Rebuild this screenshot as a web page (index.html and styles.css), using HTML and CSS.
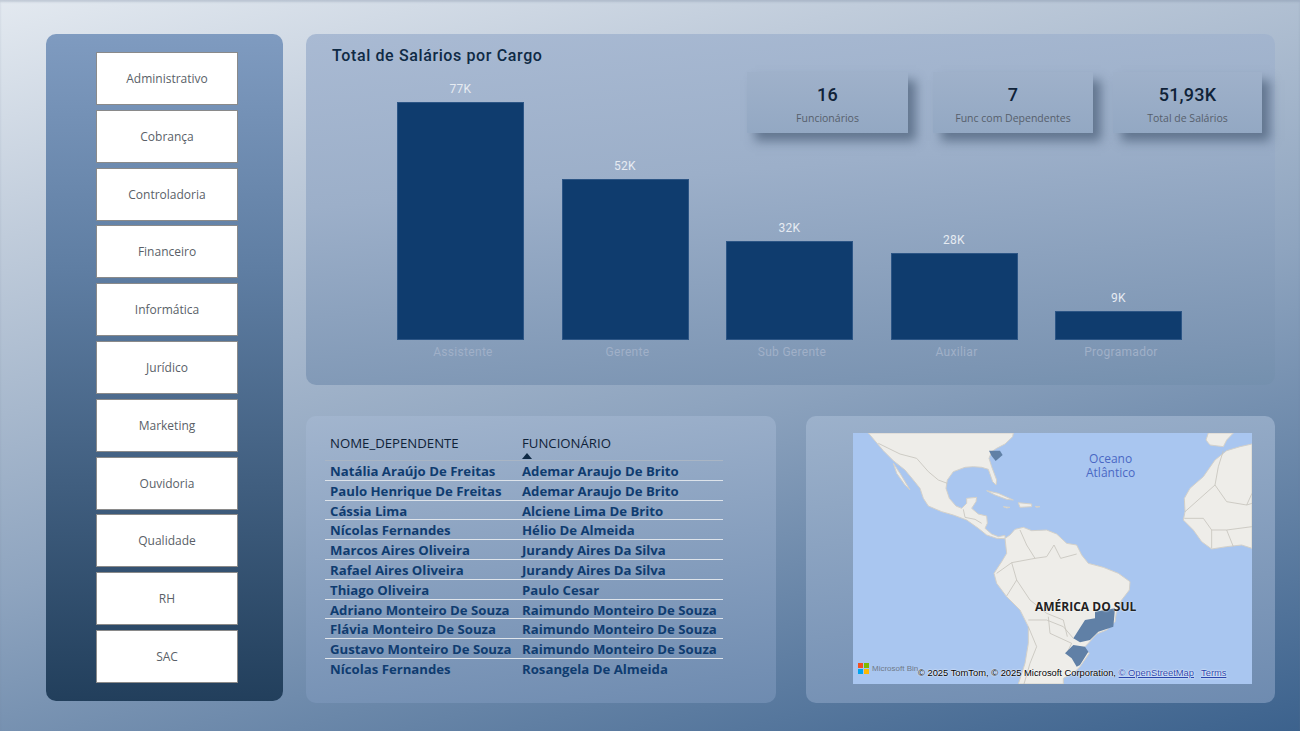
FILE: index.html
```html
<!DOCTYPE html>
<html lang="pt-br">

<head>
    <meta charset="UTF-8">
    <meta name="viewport" content="width=device-width, initial-scale=1.0">
    <title>Salários</title>
    <link rel="stylesheet" href="styles.css">
</head>

<body>
    <main class="pagina">
        <aside class="lateral">
            <button class="filtro">Administrativo</button>
            <button class="filtro">Cobrança</button>
            <button class="filtro">Controladoria</button>
            <button class="filtro">Financeiro</button>
            <button class="filtro">Informática</button>
            <button class="filtro">Jurídico</button>
            <button class="filtro">Marketing</button>
            <button class="filtro">Ouvidoria</button>
            <button class="filtro">Qualidade</button>
            <button class="filtro">RH</button>
            <button class="filtro">SAC</button>
        </aside>

        <div class="conteudo">
            <section class="painel grafico">
                <h1 class="titulo">Total de Salários por Cargo</h1>

                <div class="kpis">
                    <div class="kpi kpi-func"><strong>16</strong><span>Funcionários</span></div>
                    <div class="kpi kpi-dep"><strong>7</strong><span>Func com Dependentes</span></div>
                    <div class="kpi kpi-total"><strong>51,93K</strong><span>Total de Salários</span></div>
                </div>

                <div class="barras">
                    <div class="coluna"><span class="valor">77K</span><div class="barra" style="height: 238px"></div><span class="cargo">Assistente</span></div>
                    <div class="coluna"><span class="valor">52K</span><div class="barra" style="height: 161px"></div><span class="cargo">Gerente</span></div>
                    <div class="coluna"><span class="valor">32K</span><div class="barra" style="height: 99px"></div><span class="cargo">Sub Gerente</span></div>
                    <div class="coluna"><span class="valor">28K</span><div class="barra" style="height: 87px"></div><span class="cargo">Auxiliar</span></div>
                    <div class="coluna"><span class="valor">9K</span><div class="barra" style="height: 29px"></div><span class="cargo">Programador</span></div>
                </div>
            </section>

            <div class="linha-baixo">
                <section class="painel tabela-painel">
                    <table class="tabela">
                        <thead>
                            <tr>
                                <th class="col-nome">NOME_DEPENDENTE</th>
                                <th>FUNCIONÁRIO<i class="seta"></i></th>
                            </tr>
                        </thead>
                        <tbody>
                            <tr><td>Natália Araújo De Freitas</td><td>Ademar Araujo De Brito</td></tr>
                            <tr><td>Paulo Henrique De Freitas</td><td>Ademar Araujo De Brito</td></tr>
                            <tr><td>Cássia Lima</td><td>Alciene Lima De Brito</td></tr>
                            <tr><td>Nícolas Fernandes</td><td>Hélio De Almeida</td></tr>
                            <tr><td>Marcos Aires Oliveira</td><td>Jurandy Aires Da Silva</td></tr>
                            <tr><td>Rafael Aires Oliveira</td><td>Jurandy Aires Da Silva</td></tr>
                            <tr><td>Thiago Oliveira</td><td>Paulo Cesar</td></tr>
                            <tr><td>Adriano Monteiro De Souza</td><td>Raimundo Monteiro De Souza</td></tr>
                            <tr><td>Flávia Monteiro De Souza</td><td>Raimundo Monteiro De Souza</td></tr>
                            <tr><td>Gustavo Monteiro De Souza</td><td>Raimundo Monteiro De Souza</td></tr>
                            <tr><td>Nícolas Fernandes</td><td>Rosangela De Almeida</td></tr>
                        </tbody>
                    </table>
                </section>

                <section class="painel mapa-painel">
                    <div class="mapa">
                        <svg class="mapa-svg" viewBox="9 9 1197 753" aria-hidden="true">
                            <g class="terra">
                                <path d="M55 9 L490 9 L488 20 L465 42 L440 55 L425 65 L417 85 L425 110 L440 150 L438 165 L428 155 L415 118 L395 112 L370 110 L345 112 L310 125 L292 150 L288 175 L298 205 L318 228 L335 235 L350 220 L350 205 L380 202 L378 215 L365 235 L385 252 L410 258 L412 280 L405 295 L425 312 L445 320 L465 316 L465 326 L440 325 L410 315 L385 295 L350 270 L310 255 L275 245 L235 228 L220 205 L210 175 L190 150 L165 120 L130 92 L100 62 Z" />
                                <path d="M130 100 L150 130 L180 180 L165 165 L140 130 Z" />
                                <path d="M410 182 L445 190 L490 210 L470 208 L435 195 Z" />
                                <path d="M505 218 L545 222 L545 230 L510 232 Z" />
                                <path d="M460 230 L480 232 L470 234 Z" />
                                <path d="M555 229 L570 230 L560 232 Z" />
                                <path d="M465 325 L480 315 L495 298 L520 292 L545 302 L590 300 L620 312 L650 340 L680 345 L695 375 L715 400 L760 412 L805 430 L840 455 L838 480 L815 510 L800 540 L795 575 L770 600 L740 612 L715 640 L700 655 L718 670 L690 710 L675 725 L640 745 L640 762 L505 762 L525 700 L535 640 L535 590 L510 540 L470 500 L440 460 L432 430 L455 395 L470 370 Z" />
                                <path d="M1206 42 L1170 50 L1130 62 L1095 90 L1060 140 L1020 175 L1003 205 L1005 245 L1000 270 L1030 300 L1055 335 L1085 357 L1130 350 L1175 345 L1206 355 Z" />
                                <path d="M1075 9 L1150 9 L1130 30 L1120 50 L1080 45 L1068 30 Z" />
                            </g>
                            <g class="fronteiras">
                                <path d="M85 40 L150 72 L200 85 L235 125 L265 150 L292 160" />
                                <path d="M340 238 L345 262 L375 268 L395 280" />
                                <path d="M510 300 L530 345 L555 385 L590 380 L612 345" />
                                <path d="M612 345 L632 385 L680 372" />
                                <path d="M440 430 L485 398 L555 385" />
                                <path d="M485 398 L500 450 L540 510 L590 550 L640 570 L652 620" />
                                <path d="M470 498 L500 450" />
                                <path d="M535 570 L590 570 L640 590 L670 625" />
                                <path d="M535 590 L560 650 L540 700 L522 762" />
                                <path d="M595 560 L600 610 L665 640 L650 670" />
                                <path d="M1005 245 L1095 165 L1130 215 L1190 225 L1206 220" />
                                <path d="M1095 165 L1105 110 L1120 62" />
                                <path d="M1003 265 L1060 265 L1085 300 L1085 355" />
                                <path d="M1085 300 L1130 300 L1150 350" />
                                <path d="M1130 300 L1206 290" />
                                <path d="M1190 225 L1206 190" />
                            </g>
                            <g class="estados">
                                <path d="M417 62 L450 62 L458 75 L437 93 L425 78 Z" />
                                <path d="M735 545 L795 535 L790 590 L745 605 L720 630 L690 637 L670 625 L705 570 L735 565 Z" />
                                <path d="M645 670 L670 645 L705 650 L715 665 L690 705 L680 710 L665 685 Z" />
                            </g>
                        </svg>
                        <span class="rotulo-oceano">Oceano<br>Atlântico</span>
                        <span class="rotulo-sul">AMÉRICA DO SUL</span>
                        <div class="marca">
                            <svg width="11" height="11" viewBox="0 0 11 11" aria-hidden="true">
                                <rect width="5" height="5" fill="#f25022" />
                                <rect x="6" width="5" height="5" fill="#7fba00" />
                                <rect y="6" width="5" height="5" fill="#00a4ef" />
                                <rect x="6" y="6" width="5" height="5" fill="#ffb900" />
                            </svg>
                            <span>Microsoft Bing</span>
                        </div>
                        <div class="creditos">© 2025 TomTom, © 2025 Microsoft Corporation, <a>© OpenStreetMap</a><a class="termos">Terms</a></div>
                    </div>
                </section>
            </div>
        </div>
    </main>
</body>

</html>
```

FILE: styles.css
```css
html,
body {
    margin: 0;
    height: 100%;
    font-family: 'Open Sans', 'Noto Sans', sans-serif;
}

.pagina {
    box-sizing: border-box;
    width: 1300px;
    height: 731px;
    overflow: hidden;
    padding: 34px 25px 28px 46px;
    display: flex;
    gap: 23px;
    background: linear-gradient(165deg, #e3e9f0 0%, #c0ccdb 22%, #8ea4bf 55%, #3c628d 100%);
    box-shadow: inset 0 2px 2px rgba(120, 135, 160, 0.3);
}

.lateral {
    box-sizing: border-box;
    width: 237px;
    height: 667px;
    padding: 18px 0 0 5px;
    display: flex;
    flex-direction: column;
    align-items: center;
    gap: 4.8px;
    border-radius: 10px;
    background: linear-gradient(180deg, #7f9bc0 0%, #5f7ea3 35%, #223f5c 100%);
}

.filtro {
    box-sizing: border-box;
    width: 142px;
    height: 53px;
    padding: 0;
    background: #fff;
    border: 1px solid #8a8a8a;
    color: #5a5f68;
    font-family: inherit;
    font-size: 12px;
}

.conteudo {
    width: 969px;
    display: flex;
    flex-direction: column;
    gap: 31px;
}

.painel {
    border-radius: 10px;
}

.grafico {
    position: relative;
    box-sizing: border-box;
    height: 351px;
    padding-bottom: 25px;
    display: flex;
    flex-direction: column;
    background: linear-gradient(175deg, #a9bad3 0%, #9cafc9 40%, #7c95b3 90%, #7490ae 100%);
}

.titulo {
    margin: 0;
    padding: 12px 0 0 26px;
    color: #0f2a45;
    font-family: Roboto, sans-serif;
    font-size: 16px;
    font-weight: 500;
    letter-spacing: 0.62px;
}

.kpis {
    position: absolute;
    top: 38px;
    left: 441px;
    display: flex;
}

.kpi {
    box-sizing: border-box;
    height: 61px;
    display: flex;
    flex-direction: column;
    align-items: center;
    padding-top: 12px;
    background: linear-gradient(180deg, #9fb1ca, #93a8c3);
    box-shadow: 8px 8px 10px rgba(50, 70, 95, 0.55);
}

.kpi strong {
    color: #0f2238;
    font-family: Roboto, sans-serif;
    font-size: 18px;
    font-weight: 500;
    letter-spacing: 0.2px;
}

.kpi span {
    margin-top: 6px;
    color: #565f6c;
    font-size: 10.5px;
}

.kpi-func {
    width: 161px;
}

.kpi-dep {
    width: 160px;
    margin-left: 25px;
}

.kpi-total {
    width: 149px;
    margin-left: 20px;
}

.barras {
    margin-top: auto;
    padding-left: 91px;
    display: flex;
    align-items: flex-end;
    gap: 37.5px;
}

.coluna {
    width: 127px;
    display: flex;
    flex-direction: column;
    align-items: center;
}

.valor {
    margin-bottom: 6px;
    color: #e6ebf2;
    font-family: Roboto, sans-serif;
    font-size: 12px;
    letter-spacing: 0.3px;
}

.barra {
    box-sizing: border-box;
    width: 100%;
    background: #0f3c6e;
    border: 1px solid #2c5585;
}

.cargo {
    height: 16px;
    margin-top: 4px;
    padding-left: 5px;
    color: #a0b0c8;
    font-family: Roboto, sans-serif;
    font-size: 12px;
    line-height: 16px;
    letter-spacing: 0.3px;
    white-space: nowrap;
}

.linha-baixo {
    display: flex;
    gap: 30px;
}

.tabela-painel {
    box-sizing: border-box;
    width: 470px;
    height: 287px;
    padding: 16px 0 0 19px;
    background: linear-gradient(172deg, #a2b5ce 0%, #6e8bb0 100%);
}

.tabela {
    width: 398px;
    table-layout: fixed;
    border-collapse: collapse;
    color: #0f3c70;
}

.tabela th {
    position: relative;
    height: 28px;
    padding: 0 0 0 5px;
    border-bottom: 1px solid #a9b5c4;
    color: #0f2238;
    font-size: 13.2px;
    font-weight: 400;
    line-height: 22px;
    text-align: left;
    vertical-align: top;
}

.col-nome {
    width: 187px;
}

.seta {
    position: absolute;
    left: 5px;
    bottom: 1px;
    width: 0;
    height: 0;
    border-left: 5px solid transparent;
    border-right: 5px solid transparent;
    border-bottom: 6px solid #0f2a45;
}

.tabela td {
    height: 16.8px;
    padding: 2px 0 0 5px;
    border-bottom: 1px solid #dde3ea;
    font-size: 13.2px;
    font-weight: 700;
    line-height: 16.8px;
    white-space: nowrap;
}

.tabela tr:last-child td {
    border-bottom: 0;
}

.mapa-painel {
    box-sizing: border-box;
    width: 469px;
    height: 287px;
    padding: 17px 0 0 47px;
    background: linear-gradient(172deg, #9cb1cb 0%, #6e8bb0 100%);
}

.mapa {
    position: relative;
    width: 399px;
    height: 251px;
    overflow: hidden;
    background: #a9c6f0;
}

.mapa-svg {
    display: block;
    width: 399px;
    height: 251px;
    filter: blur(0.4px);
}

.terra path {
    fill: #eeede9;
    stroke: #d3d0c9;
    stroke-width: 3;
    stroke-linejoin: round;
}

.fronteiras path {
    fill: none;
    stroke: #c6c4bd;
    stroke-width: 2.5;
    stroke-linejoin: round;
}

.estados path {
    fill: #6080a6;
}

.rotulo-oceano {
    position: absolute;
    left: 233px;
    top: 19px;
    color: #4a68c4;
    font-size: 12px;
    line-height: 14px;
    text-align: center;
}

.rotulo-sul {
    position: absolute;
    left: 182px;
    top: 165px;
    color: #222;
    font-size: 12px;
    font-weight: 700;
    white-space: nowrap;
    text-shadow: 0 0 2px #fff;
}

.marca {
    position: absolute;
    left: 5px;
    bottom: 10px;
    width: 60px;
    display: flex;
    align-items: center;
    gap: 3px;
    overflow: hidden;
    color: #707a88;
    font-family: 'Liberation Sans', Arial, sans-serif;
    font-size: 8px;
    white-space: nowrap;
}

.marca svg {
    flex: none;
}

.creditos {
    position: absolute;
    left: 65px;
    bottom: 6px;
    color: #000;
    font-family: 'Liberation Sans', Arial, sans-serif;
    font-size: 9.35px;
    white-space: nowrap;
    text-shadow: 0 0 2px #fff, 0 0 1px #fff;
}

.creditos a {
    color: #2a45ad;
    text-decoration: underline;
}

.termos {
    margin-left: 7px;
}
```
